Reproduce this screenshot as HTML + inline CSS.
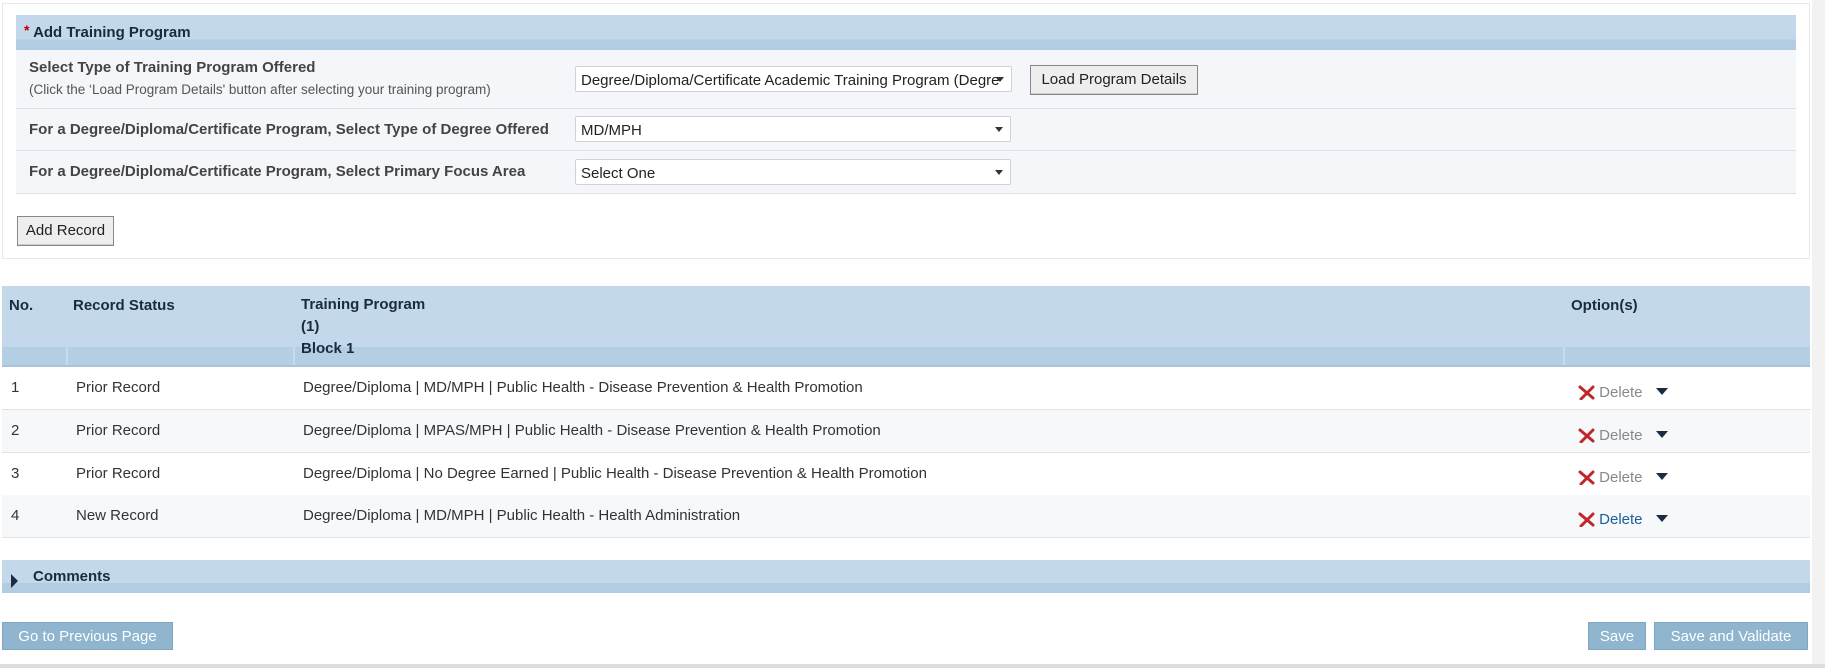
<!DOCTYPE html>
<html><head><meta charset="utf-8"><style>
*{box-sizing:border-box;margin:0;padding:0}
body{width:1825px;height:668px;background:#fff;font-family:"Liberation Sans",Arial,sans-serif;position:relative;overflow:hidden;color:#333}
.abs{position:absolute}
.panel{left:2px;top:3px;width:1808px;height:256px;border:1px solid #e8e8e8;background:#fff}
.band{background:linear-gradient(#c3d9eb 0,#c3d9eb 70%,#b2cde2 70%,#b2cde2 100%)}
.hdr{left:16px;top:15px;width:1780px;height:35px;font-weight:bold;font-size:15px;color:#1b2b3f;padding:9px 0 0 8px}
.row{left:16px;width:1780px;background:#f5f6f9;border-bottom:1px solid #dde1e6}
.lbl{position:absolute;left:0;top:0;width:546px;height:100%;font-weight:bold;font-size:15px;color:#444;padding-left:13px}
.sel{position:absolute;background:#fff;border:1px solid #cfd3d8;border-radius:2px;height:26px;width:436px;font-size:15px;color:#222;padding:5px 0 0 5px}
.sel:after{content:"";position:absolute;right:7px;top:10px;border-left:4px solid transparent;border-right:4px solid transparent;border-top:5px solid #333}
.btn{position:absolute;background:#eee;border:1px solid #888;font-size:15px;color:#222;text-align:center;padding-top:5px;box-shadow:inset 0 -1px 0 #ccc}
.th{font-weight:bold;font-size:15px;color:#1b2b3f;position:absolute}
.tr{position:absolute;left:2px;width:1808px;height:43px;border-bottom:1px solid #dfe3e8;font-size:15px;color:#333}
.tr span{position:absolute;top:12px}
.bb{position:absolute;background:#8fb5cf;border:1px solid #7fa6c2;color:#fff;font-size:15px;text-align:center;padding-top:5px;height:28px}
</style></head><body>
<div class="abs panel"></div>
<div class="abs band hdr"><span style="color:#b00;font-size:14px;position:relative;top:-2px">*</span> Add Training Program</div>
<div class="abs row" style="top:50px;height:59px"><div class="lbl" style="background:#f5f6f9;padding-top:9px">Select Type of Training Program Offered<div style="font-weight:normal;font-size:13.5px;color:#555;margin-top:6px">(Click the ‘Load Program Details' button after selecting your training program)</div></div>
<div class="sel" style="left:559px;top:16px;width:437px">Degree/Diploma/Certificate Academic Training Program (Degre</div>
<div class="btn" style="left:1014px;top:15px;width:168px;height:30px">Load Program Details</div></div>
<div class="abs row" style="top:109px;height:42px"><div class="lbl" style="padding-top:12px">For a Degree/Diploma/Certificate Program, Select Type of Degree Offered</div><div class="sel" style="left:559px;top:7px">MD/MPH</div></div>
<div class="abs row" style="top:151px;height:43px"><div class="lbl" style="padding-top:12px">For a Degree/Diploma/Certificate Program, Select Primary Focus Area</div><div class="sel" style="left:559px;top:8px">Select One</div></div>
<div class="btn" style="left:17px;top:216px;width:97px;height:30px">Add Record</div>

<div class="abs" style="left:2px;top:286px;width:1808px;height:81px;background:#c3d9eb;border-bottom:2px solid #a9c4da"></div>
<div class="abs" style="left:2px;top:347px;width:1808px;height:18px;background:#b4cee3"></div>
<div class="abs" style="left:66px;top:347px;width:2px;height:18px;background:#c8dbea"></div>
<div class="abs" style="left:293px;top:347px;width:2px;height:18px;background:#c8dbea"></div>
<div class="abs" style="left:1563px;top:347px;width:2px;height:18px;background:#c8dbea"></div>
<div class="th" style="left:9px;top:297px">No.</div>
<div class="th" style="left:73px;top:297px">Record Status</div>
<div class="th" style="left:301px;top:297px;line-height:22px;top:294px">Training Program<br>(1)<br>Block 1</div>
<div class="th" style="left:1571px;top:297px">Option(s)</div>

<div class="tr" style="top:367px;background:#fff"><span style="left:9px">1</span><span style="left:74px">Prior Record</span><span style="left:301px">Degree/Diploma | MD/MPH | Public Health - Disease Prevention &amp; Health Promotion</span></div>
<div class="tr" style="top:410px;background:#f7f8fa"><span style="left:9px">2</span><span style="left:74px">Prior Record</span><span style="left:301px">Degree/Diploma | MPAS/MPH | Public Health - Disease Prevention &amp; Health Promotion</span></div>
<div class="tr" style="top:453px;background:#fff"><span style="left:9px">3</span><span style="left:74px">Prior Record</span><span style="left:301px">Degree/Diploma | No Degree Earned | Public Health - Disease Prevention &amp; Health Promotion</span></div>
<div class="tr" style="top:495px;background:#f7f8fa"><span style="left:9px">4</span><span style="left:74px">New Record</span><span style="left:301px">Degree/Diploma | MD/MPH | Public Health - Health Administration</span></div>

<!-- delete options -->
<div class="abs" style="left:1578px;top:384px;font-size:15px;color:#888"><svg width="17" height="15" style="vertical-align:-3px"><path d="M2 2 L15 13 M15 2 L3 14" stroke="#c0272d" stroke-width="3" stroke-linecap="round"/></svg> Delete</div>
<div class="abs" style="left:1578px;top:427px;font-size:15px;color:#888"><svg width="17" height="15" style="vertical-align:-3px"><path d="M2 2 L15 13 M15 2 L3 14" stroke="#c0272d" stroke-width="3" stroke-linecap="round"/></svg> Delete</div>
<div class="abs" style="left:1578px;top:469px;font-size:15px;color:#888"><svg width="17" height="15" style="vertical-align:-3px"><path d="M2 2 L15 13 M15 2 L3 14" stroke="#c0272d" stroke-width="3" stroke-linecap="round"/></svg> Delete</div>
<div class="abs" style="left:1578px;top:511px;font-size:15px;color:#1a5e9a"><svg width="17" height="15" style="vertical-align:-3px"><path d="M2 2 L15 13 M15 2 L3 14" stroke="#c0272d" stroke-width="3" stroke-linecap="round"/></svg> Delete</div>
<svg class="abs" style="left:1656px;top:388px" width="12" height="60"><path d="M0 0h12l-6 7z M0 43h12l-6 7z" fill="#1b2b45"/></svg>
<svg class="abs" style="left:1656px;top:473px" width="12" height="60"><path d="M0 0h12l-6 7z M0 42h12l-6 7z" fill="#1b2b45"/></svg>

<div class="abs band" style="left:2px;top:560px;width:1808px;height:33px"></div>
<svg class="abs" style="left:11px;top:574px" width="8" height="14"><path d="M0 0L7 7L0 14z" fill="#1b2b45"/></svg>
<div class="th" style="left:33px;top:568px">Comments</div>

<div class="bb" style="left:2px;top:622px;width:171px">Go to Previous Page</div>
<div class="bb" style="left:1588px;top:622px;width:58px">Save</div>
<div class="bb" style="left:1654px;top:622px;width:154px">Save and Validate</div>

<div class="abs" style="left:1812px;top:0;width:13px;height:668px;background:#f2f2f2"></div>
<div class="abs" style="left:0;top:664px;width:1825px;height:4px;background:#ddd"></div>
</body></html>
